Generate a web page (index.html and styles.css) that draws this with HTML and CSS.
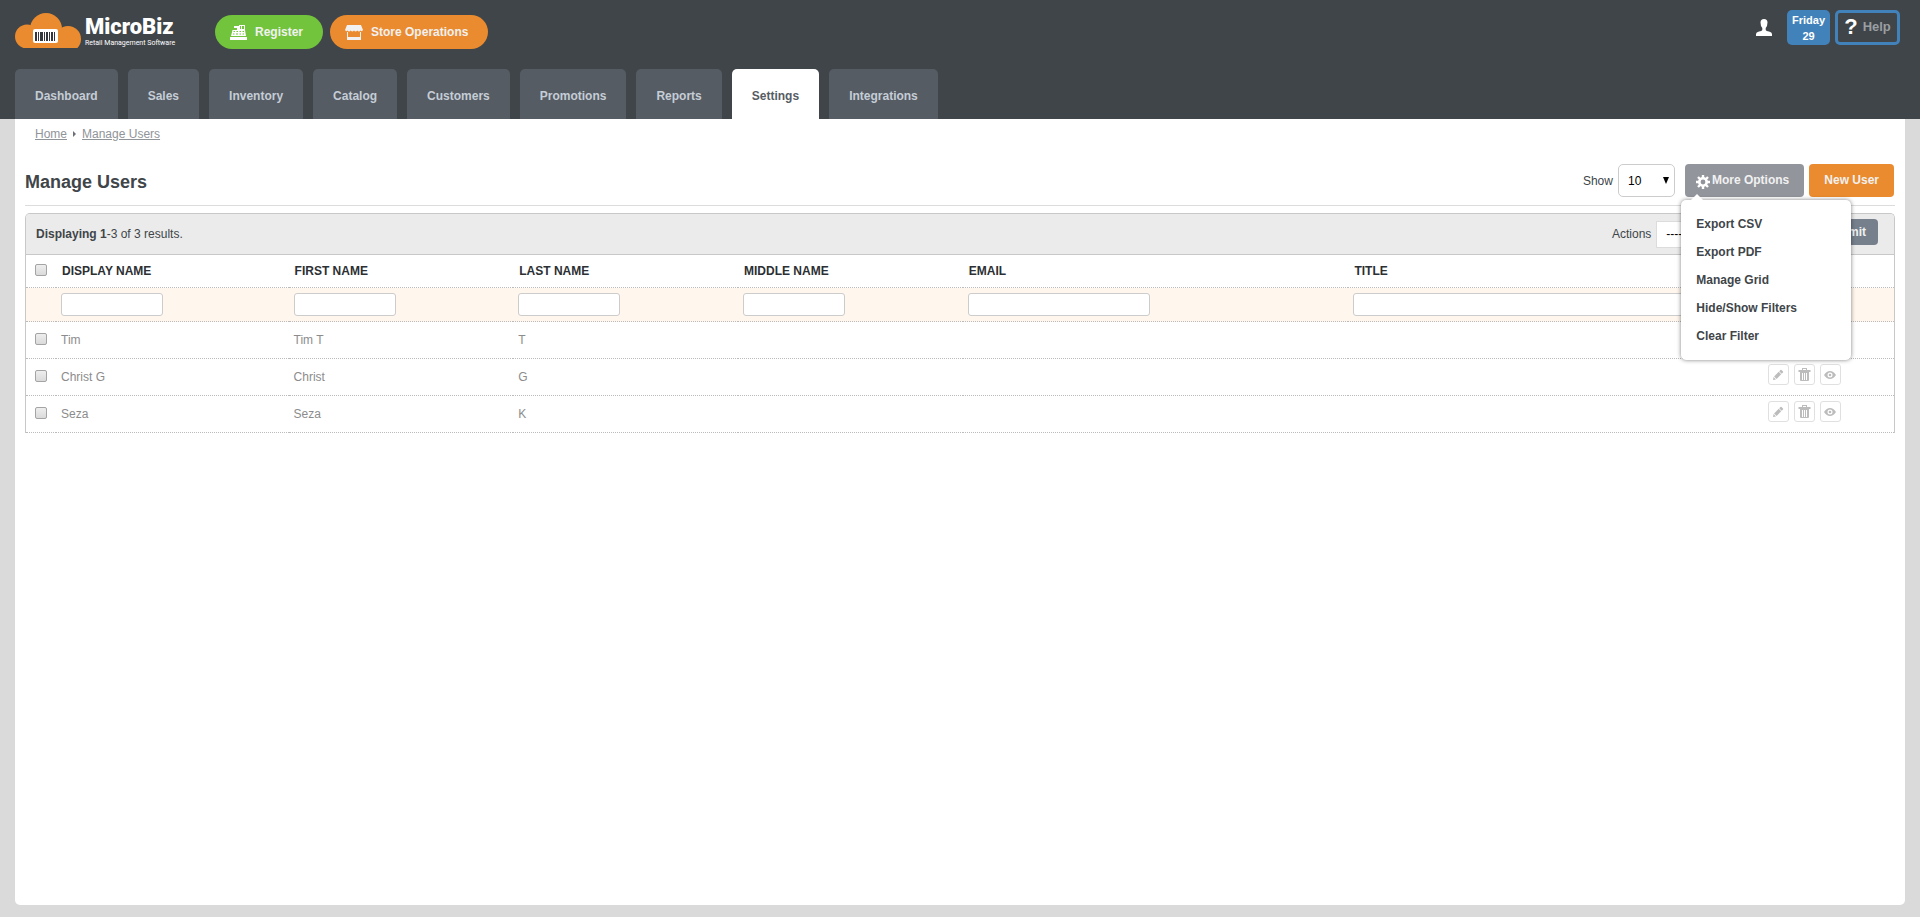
FILE: index.html
```
<!DOCTYPE html>
<html lang="en">
	<head>
		<title>MicroBiz - Manage Users</title>
		<meta charset="utf-8" />
		<link rel="stylesheet" href="styles.css">
	</head>
	<body>
		<!-- Shared icons -->
		<svg class="icon-defs" aria-hidden="true">
			<symbol id="icon-edit" viewBox="0 0 12 12">
				<path d="M1 11 L1.6 8 L4 10.4 Z M2.1 7.400 L6.7 2.8 L9.2 5.3 L4.600 9.900 Z M7.2 2.300 L8.5 1 Q9 .6 9.5 1 L11 2.5 Q11.4 3 11 3.5 L9.7 4.800 Z" />
			</symbol>
			<symbol id="icon-trash" viewBox="0 0 13 13">
				<path fill-rule="evenodd" d="M4 0 H9 V2 H12.5 V4 H.5 V2 H4 Z M5 1 V2 H8 V1 Z M2 4 H11 V12 Q11 13 10 13 H3 Q2 13 2 12 Z M4 5 V12 H5 V5 Z M6 5 V12 H7 V5 Z M8 5 V12 H9 V5 Z" />
			</symbol>
			<symbol id="icon-view" viewBox="0 0 12 8">
				<path fill-rule="evenodd" d="M0 4 Q2.6 0 6 0 T12 4 Q9.4 8 6 8 T0 4 Z M6 1.5 A2.5 2.5 0 1 0 6 6.5 A2.5 2.5 0 1 0 6 1.5 Z" />
				<circle cx="6" cy="4" r="1.3" />
			</symbol>
		</svg>

		<header class="header">
			<div class="top-bar">
				<a class="logo" href="#">
					<svg class="logo-cloud" width="66" height="35" viewBox="0 0 66 35">
						<g fill="#ea8b2f">
							<circle cx="12" cy="23.500" r="12" />
							<circle cx="31" cy="16" r="16" />
							<circle cx="53" cy="26" r="13" />
							<rect x="10" y="20" width="45" height="15" />
						</g>
						<rect x="18" y="16" width="25" height="14" rx="2" fill="#fff" />
						<path fill="#33363a" d="M20 19h2v9h-2z M23 19h1v9h-1z M25 19h3v9h-3z M29 19h1v9h-1z M31 19h2v9h-2z M34 19h1v9h-1z M36 19h2v9h-2z M39 19h1v9h-1z" />
					</svg>
					<span class="logo-text">
						<span class="logo-name">MicroBiz</span>
						<span class="logo-tagline">Retail Management Software</span>
					</span>
				</a>

				<button type="button" class="pill pill-green">
					<svg width="17" height="15" viewBox="0 0 17 15" fill="#fff">
						<path fill-rule="evenodd" d="M4 1 H9 V0 H15 V5 L16 11 H1 L2.5 5 H7 V3 H4 Z M10 1 V4 H11 V1 Z M12 1 V4 H14 V1 Z M3.5 6 V7 H5 V6 Z M6.5 6 V7 H8 V6 Z M9.5 6 V7 H11 V6 Z M12.5 6 V7 H14 V6 Z M3 8.5 V9.5 H4.5 V8.5 Z M6 8.5 V9.5 H8 V8.5 Z M9.5 8.5 V9.5 H11 V8.5 Z M12.5 8.5 V9.5 H14 V8.5 Z" />
						<rect y="12" width="17" height="3" />
					</svg>
					Register
				</button>
				<button type="button" class="pill pill-orange">
					<svg width="18" height="15" viewBox="0 0 18 15" fill="#f1f1f1">
						<path d="M2 0 H16 L18 5 Q17 7 15.5 5.5 Q14 7.5 12.3 5.5 Q10.6 7.5 9 5.5 Q7.4 7.5 5.7 5.5 Q4 7.5 2.5 5.5 Q1 7 0 5 Z" />
						<path d="M2 7 H3 V12 H15 V7 H16 V15 H2 Z" />
					</svg>
					Store Operations
				</button>

				<div class="account">
					<svg width="16" height="17" viewBox="0 0 16 17" fill="#fff">
						<path d="M8 0 Q11.5 0 11.5 3.5 Q11.5 7 9.7 9 V11 Q10 12 13 12.5 Q16 13.2 16 15 V17 H0 V15 Q0 13.2 3 12.5 Q6 12 6.3 11 V9 Q4.5 7 4.5 3.5 Q4.5 0 8 0 Z" />
					</svg>
					<div class="date-badge">
						<span>Friday</span>
						<span>29</span>
					</div>
					<button type="button" class="help"><span class="help-mark">?</span>Help</button>
				</div>
			</div>

			<nav class="tabs">
				<a class="tab" href="#">Dashboard</a>
				<a class="tab" href="#">Sales</a>
				<a class="tab" href="#">Inventory</a>
				<a class="tab" href="#">Catalog</a>
				<a class="tab" href="#">Customers</a>
				<a class="tab" href="#">Promotions</a>
				<a class="tab" href="#">Reports</a>
				<a class="tab tab-active" href="#">Settings</a>
				<a class="tab" href="#">Integrations</a>
			</nav>
		</header>

		<main class="page">
			<div class="breadcrumb">
				<a href="#">Home</a>
				<span class="breadcrumb-arrow"></span>
				<a href="#">Manage Users</a>
			</div>

			<div class="title-bar">
				<h1 class="title">Manage Users</h1>
				<label for="pageSize">Show</label>
				<span class="select-box page-size">
					<select id="pageSize">
						<option>10</option>
						<option>25</option>
						<option>50</option>
					</select>
				</span>
				<div class="more-options">
					<button type="button" class="button button-gray">
						<svg class="gear" width="14" height="14" viewBox="0 0 14 14">
							<circle cx="7" cy="7" r="3.7" fill="none" stroke="#fff" stroke-width="2.6" />
							<path stroke="#fff" stroke-width="2.4" d="M7 0V3 M7 11V14 M0 7H3 M11 7H14 M2 2L4 4 M10 10L12 12 M12 2L10 4 M4 10L2 12" />
						</svg>
						More Options
					</button>
					<div class="menu">
						<a class="menu-item" href="#">Export CSV</a>
						<a class="menu-item" href="#">Export PDF</a>
						<a class="menu-item" href="#">Manage Grid</a>
						<a class="menu-item" href="#">Hide/Show Filters</a>
						<a class="menu-item" href="#">Clear Filter</a>
					</div>
				</div>
				<button type="button" class="button button-orange">New User</button>
			</div>

			<section class="grid">
				<div class="grid-toolbar">
					<div class="summary"><b>Displaying 1</b>-3 of 3 results.</div>
					<label for="bulkAction">Actions</label>
					<span class="select-box bulk-action">
						<select id="bulkAction">
							<option>--------</option>
						</select>
					</span>
					<button type="button" class="submit">Submit</button>
				</div>

				<table class="users">
					<colgroup>
						<col class="col-check">
						<col class="col-display">
						<col class="col-name">
						<col class="col-name">
						<col class="col-name">
						<col class="col-email">
						<col class="col-title">
						<col>
					</colgroup>
					<thead>
						<tr>
							<th><input type="checkbox" aria-label="Select all"></th>
							<th>DISPLAY NAME</th>
							<th>FIRST NAME</th>
							<th>LAST NAME</th>
							<th>MIDDLE NAME</th>
							<th>EMAIL</th>
							<th>TITLE</th>
							<th></th>
						</tr>
						<tr class="filters">
							<td></td>
							<td><input type="text" class="filter" aria-label="Display name"></td>
							<td><input type="text" class="filter" aria-label="First name"></td>
							<td><input type="text" class="filter" aria-label="Last name"></td>
							<td><input type="text" class="filter" aria-label="Middle name"></td>
							<td><input type="text" class="filter filter-email" aria-label="Email"></td>
							<td><input type="text" class="filter filter-title" aria-label="Title"></td>
							<td></td>
						</tr>
					</thead>
					<tbody>
						<tr>
							<td><input type="checkbox" aria-label="Select Tim"></td>
							<td>Tim</td>
							<td>Tim T</td>
							<td>T</td>
							<td></td>
							<td></td>
							<td></td>
							<td>
								<div class="row-actions">
									<button type="button" aria-label="Edit"><svg width="12" height="12"><use href="#icon-edit" /></svg></button>
									<button type="button" aria-label="Delete"><svg width="13" height="13"><use href="#icon-trash" /></svg></button>
									<button type="button" aria-label="View"><svg width="12" height="8"><use href="#icon-view" /></svg></button>
								</div>
							</td>
						</tr>
						<tr>
							<td><input type="checkbox" aria-label="Select Christ G"></td>
							<td>Christ G</td>
							<td>Christ</td>
							<td>G</td>
							<td></td>
							<td></td>
							<td></td>
							<td>
								<div class="row-actions">
									<button type="button" aria-label="Edit"><svg width="12" height="12"><use href="#icon-edit" /></svg></button>
									<button type="button" aria-label="Delete"><svg width="13" height="13"><use href="#icon-trash" /></svg></button>
									<button type="button" aria-label="View"><svg width="12" height="8"><use href="#icon-view" /></svg></button>
								</div>
							</td>
						</tr>
						<tr>
							<td><input type="checkbox" aria-label="Select Seza"></td>
							<td>Seza</td>
							<td>Seza</td>
							<td>K</td>
							<td></td>
							<td></td>
							<td></td>
							<td>
								<div class="row-actions">
									<button type="button" aria-label="Edit"><svg width="12" height="12"><use href="#icon-edit" /></svg></button>
									<button type="button" aria-label="Delete"><svg width="13" height="13"><use href="#icon-trash" /></svg></button>
									<button type="button" aria-label="View"><svg width="12" height="8"><use href="#icon-view" /></svg></button>
								</div>
							</td>
						</tr>
					</tbody>
				</table>
			</section>
		</main>
	</body>
</html>
```
FILE: styles.css
```
* {
	padding: 0;
	margin: 0;
	box-sizing: border-box;
}

body {
	min-height: 100vh;
	font-family: "Liberation Sans", Arial, sans-serif;
	font-size: 12px;
	line-height: 16px;
	color: #404549;
	background: #dadada;

	display: flex;
	flex-direction: column;
}

button,
input,
select {
	font: inherit;
}

button {
	border: none;
	cursor: pointer;
}

a {
	color: inherit;
	text-decoration: none;
}

.icon-defs {
	display: none;
}

/* Header */
.header {
	background: #404549;
	padding: 0 15px;
}

.top-bar {
	height: 69px;
	padding-top: 10px;

	display: flex;
	align-items: flex-start;
}

.logo {
	width: 200px;
	color: #fff;
	padding-top: 3px;

	display: flex;
	gap: 4px;
}

.logo-text {
	padding-top: 3px;
	font-family: Roboto, sans-serif;

	display: flex;
	flex-direction: column;
}

.logo-name {
	font-size: 22px;
	font-weight: 900;
	line-height: 22px;
}

.logo-tagline {
	font-size: 7px;
	line-height: 10px;
	white-space: nowrap;
}

.pill {
	height: 34px;
	margin: 5px 7px 0 0;
	padding: 0 20px 0 15px;
	border-radius: 17px;
	color: #f1f1f1;
	font-weight: bold;

	display: flex;
	align-items: center;
	gap: 8px;
}

.pill-green {
	background: #71c43b;
}

.pill-orange {
	background: #ea8b2f;
}

.account {
	margin-left: auto;
	padding-right: 5px;

	display: flex;
	align-items: center;
}

.date-badge {
	width: 43px;
	height: 35px;
	margin: 0 5px 0 15px;
	padding-top: 2px;
	border-radius: 5px;
	background: #4282ba;
	color: #fff;
	font-size: 11px;
	font-weight: bold;
	text-align: center;

	display: flex;
	flex-direction: column;
}

.help {
	width: 65px;
	height: 35px;
	padding-bottom: 2px;
	border: 3px solid #4282ba;
	border-radius: 5px;
	background: none;
	color: #9a9fa3;
	font-size: 13px;
	font-weight: bold;

	display: flex;
	align-items: center;
	justify-content: center;
	gap: 5px;
}

.help-mark {
	color: #fff;
	font-size: 22px;
}

.tabs {
	display: flex;
	gap: 10px;
}

.tab {
	padding: 2px 20px 0;
	height: 50px;
	border-radius: 5px 5px 0 0;
	background: #565c64;
	color: #c5cdd6;
	font-weight: bold;
	line-height: 50px;
}

.tab-active {
	background: #fff;
	color: #565c64;
}

/* Page */
.page {
	flex: 1;
	margin: 0 15px 12px;
	padding: 0 10px;
	border-radius: 0 0 5px 5px;
	background: #fff;
}

.breadcrumb {
	padding: 7px 10px 0;
	color: #8f9499;

	display: flex;
	align-items: center;
}

.breadcrumb a {
	text-decoration: underline;
}

.breadcrumb-arrow {
	margin: 0 6px;
	border: 3px solid transparent;
	border-left-color: #6b7075;
	border-right: none;
}

.title-bar {
	margin-top: 22px;
	padding: 0 1px 8px 0;
	border-bottom: 1px solid #dcdcdc;

	display: flex;
	align-items: center;
}

.title {
	margin-right: auto;
	padding-top: 2px;
	font-size: 18px;
	line-height: 20px;
}

.select-box {
	position: relative;
}

.select-box select {
	width: 100%;
	height: 100%;
	appearance: none;
	border: 1px solid #ccc;
	background: #fff;
	color: #000;
	padding: 0 9px;
}

.select-box::after {
	content: "";
	position: absolute;
	top: 50%;
	right: 6px;
	margin-top: -4px;
	border: 3px solid transparent;
	border-top: 7px solid #000;
	border-bottom: none;
}

.page-size {
	width: 57px;
	height: 33px;
	margin: 0 10px 0 5px;
}

.page-size select {
	border-radius: 5px;
}

.button {
	height: 33px;
	padding: 0 15px 2px;
	border-radius: 4px;
	color: #f1f1f1;
	font-weight: bold;

	display: flex;
	align-items: center;
}

.button-gray {
	background: #92959c;
	padding-left: 11px;
	gap: 2px;
}

.gear {
	margin-top: 4px;
}

.button-orange {
	background: #ea8b2f;
}

/* Drop-down menu */
.more-options {
	position: relative;
	margin-right: 5px;
}

.menu {
	position: absolute;
	top: 36px;
	right: -47px;
	z-index: 2;
	width: 170px;
	padding: 10px 15px;
	border-radius: 5px;
	background: #fff;
	box-shadow: 0 0 4px rgba(0, 0, 0, 0.5);
}

.menu::before {
	content: "";
	position: absolute;
	top: -6px;
	left: 10px;
	border: 6px solid transparent;
	border-bottom-color: #fff;
	border-top: none;
}

.menu-item {
	display: block;
	font-weight: bold;
	line-height: 28px;
}

/* Users grid */
.grid {
	margin-top: 7px;
	border: 1px solid #c8c8c8;
	border-bottom: none;
	border-radius: 5px 5px 0 0;
}

.grid-toolbar {
	height: 41px;
	padding: 0 16px 0 10px;
	border-bottom: 1px solid #c8c8c8;
	border-radius: 4px 4px 0 0;
	background: #ebebeb;

	display: flex;
	align-items: center;
}

.summary {
	margin-right: auto;
}

.bulk-action {
	width: 150px;
	height: 27px;
	margin: 0 7px 0 5px;
}

.bulk-action select {
	border-color: #dcdcdc;
}

.submit {
	height: 26px;
	margin-bottom: 4px;
	padding: 0 12px;
	border-radius: 4px;
	background: #75808c;
	color: #f1f1f1;
	font-weight: bold;
}

.users {
	width: 100%;
	table-layout: fixed;
	border-collapse: separate;
	border-spacing: 0;
	color: #8c8c8c;
}

.col-check {
	width: 30px;
}

.col-display {
	width: 12.45%;
}

.col-name {
	width: 12.03%;
}

.col-email {
	width: 20.65%;
}

.col-title {
	width: 19.5%;
}

.users th,
.users td {
	height: 37px;
	padding: 0 5px;
	border-bottom: 1px dotted #bbb;
	text-align: left;
	vertical-align: middle;
}

.users th {
	height: 33px;
	padding-left: 6px;
	color: #2c2f33;
}

.users th:first-child,
.users td:first-child {
	padding: 0 9px;
}

.users .filters td {
	height: 34px;
	background: #fff6ed;
}

.filter {
	display: block;
	width: 102px;
	height: 23px;
	padding: 0 5px;
	border: 1px solid #ccc;
	border-radius: 3px;
	background: #fff;
}

.filter-email {
	width: 182px;
}

.filter-title {
	width: 100%;
}

.users input[type="checkbox"] {
	display: block;
	width: 12px;
	height: 12px;
	margin-bottom: 2px;
	appearance: none;
	border: 1px solid #a4a4a4;
	border-radius: 2px;
	background: linear-gradient(#eee, #dadada);
}

.row-actions {
	margin-bottom: 5px;
	padding-left: 2px;

	display: flex;
	justify-content: center;
	gap: 5px;
}

.row-actions button {
	width: 21px;
	height: 21px;
	border: 1px solid #e0e0e0;
	border-radius: 3px;
	background: #fff;
	fill: #bcbcbc;

	display: flex;
	align-items: center;
	justify-content: center;
}
```
